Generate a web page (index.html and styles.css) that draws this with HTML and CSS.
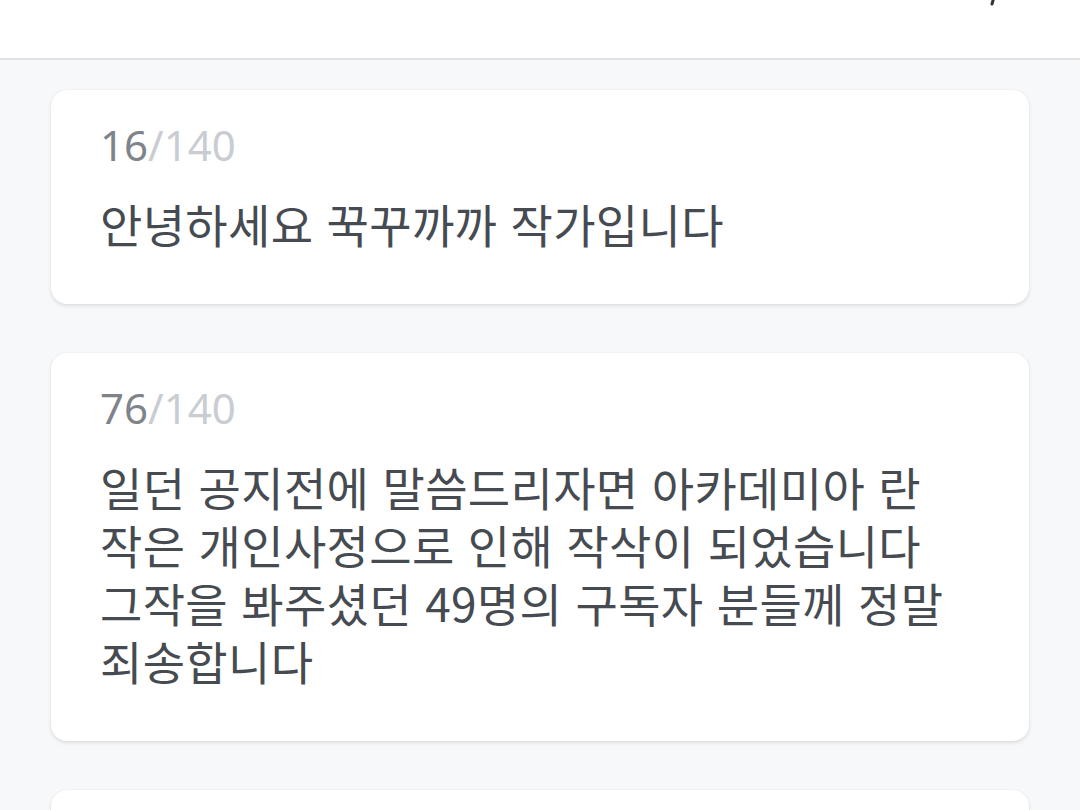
FILE: index.html
```html
<!DOCTYPE html>
<html lang="ko">
<head>
<meta charset="utf-8">
<link rel="stylesheet" href="styles.css">
</head>
<body>
<header class="topbar">
  <svg class="topbar-icon" width="24" height="24" viewBox="0 0 24 24"><path d="M18 -14 L22 -10 L18 4" fill="none" stroke="#333" stroke-width="3" stroke-linecap="round"/></svg>
</header>
<main class="list">
  <section class="card">
    <div class="count"><span class="cur">16</span><span class="max">/140</span></div>
    <p class="msg">안녕하세요 꾹꾸까까 작가입니다</p>
  </section>
  <section class="card">
    <div class="count"><span class="cur">76</span><span class="max">/140</span></div>
    <p class="msg">일던 공지전에 말씀드리자면 아카데미아 란<br>작은 개인사정으로 인해 작삭이 되었습니다<br>그작을 봐주셨던 49명의 구독자 분들께 정말<br>죄송합니다</p>
  </section>
  <section class="card"></section>
</main>
</body>
</html>
```

FILE: styles.css
```css
html, body {
  margin: 0;
  padding: 0;
}
body {
  width: 1080px;
  height: 810px;
  overflow: hidden;
  background: #f7f8fa;
  font-family: "Noto Sans", "Noto Sans CJK KR", sans-serif;
}
.topbar {
  position: relative;
  height: 58px;
  background: #ffffff;
  border-bottom: 2px solid #e0e2e5;
}
.topbar-icon {
  position: absolute;
  right: 82px;
  top: 0;
}
.list {
  display: flex;
  flex-direction: column;
  gap: 49px;
  padding: 30px 51px 0 51px;
}
.card {
  background: #ffffff;
  border-radius: 16px;
  box-shadow: 0 2px 4px rgba(0,0,0,0.10), 0 0 2px rgba(0,0,0,0.06);
  padding: 26px 49px 52px 49px;
  min-height: 120px;
}
.count {
  font-size: 42px;
  line-height: 58px;
}
.cur { color: #7e848a; }
.max { color: #c9cdd1; }
.msg {
  margin: 20px 0 0 0;
  font-family: "Noto Sans CJK KR", sans-serif;
  font-size: 46px;
  line-height: 58px;
  letter-spacing: 0.35px;
  color: #464b51;
}
```
